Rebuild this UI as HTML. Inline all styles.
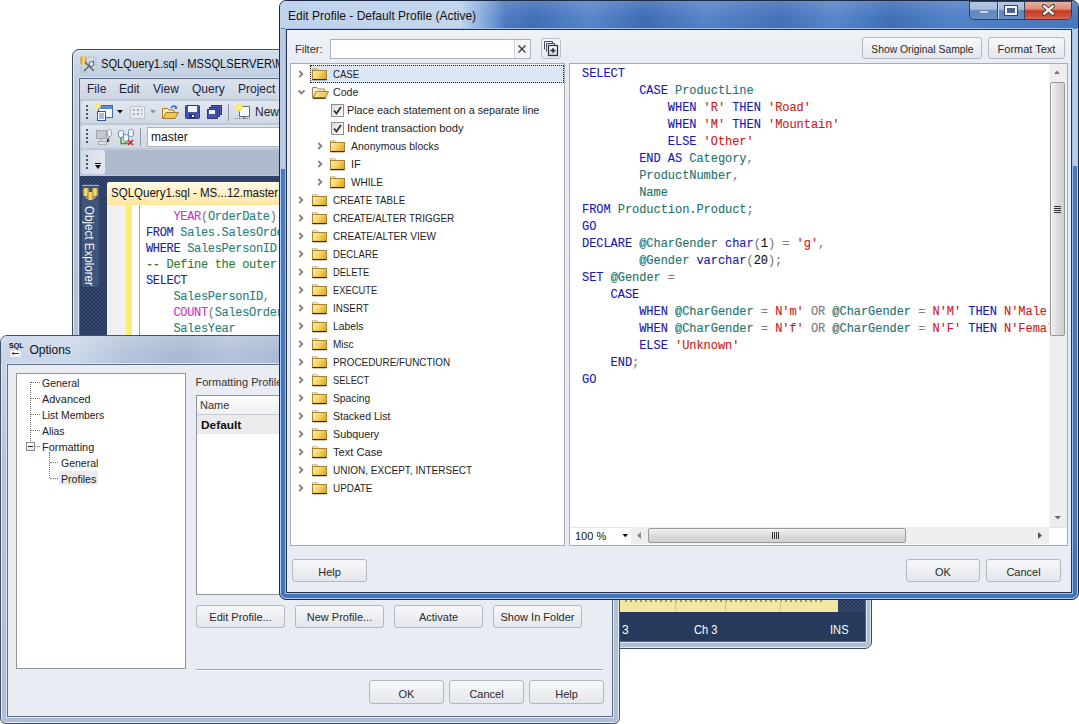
<!DOCTYPE html>
<html><head><meta charset="utf-8">
<style>
*{box-sizing:border-box;margin:0;padding:0}
html,body{width:1079px;height:724px;overflow:hidden;background:#fff;font-family:"Liberation Sans",sans-serif;font-size:11px;color:#1e1e1e}
.a{position:absolute}
.t{position:absolute;white-space:pre;line-height:1}
.mono{font-family:"Liberation Mono",monospace;-webkit-text-stroke:0.12px currentColor}
.btn{position:absolute;border:1px solid #b3b8c0;border-radius:3px;background:linear-gradient(#f7f8fa,#e3e6eb);text-align:center;color:#2a2a2a;font-size:11px;white-space:pre;padding-top:1px}
</style></head><body>
<!-- ============ SSMS WINDOW ============ -->
<div class="a" style="left:72px;top:49px;width:800px;height:600px;border:1px solid #3c485c;border-radius:7px;background:linear-gradient(#d4dfec,#bfcde0 29px,#b4c3d8 120px,#aebed4);box-shadow:inset 0 0 0 1px #e0e8f3"></div>
<!-- title icon -->
<svg class="a" style="left:80px;top:55px" width="17" height="18"><defs><linearGradient id="ti" x1="0" y1="0" x2="1" y2="0"><stop offset="0" stop-color="#c09020"/><stop offset=".5" stop-color="#fbe070"/><stop offset="1" stop-color="#c89a28"/></linearGradient></defs><rect x="0.5" y="1" width="6" height="9" rx="2" fill="url(#ti)"/><path d="M4 16 L14 6 M5 7 L14 16" stroke="#6a6a6a" stroke-width="1.6"/><circle cx="11.5" cy="9" r="2.4" fill="#e8eef8" stroke="#557"/><path d="M8 2 h8 v8" fill="none" stroke="#6cba6c" stroke-dasharray="1 1.5"/><path d="M1 12 v5 h6" fill="none" stroke="#6cba6c" stroke-dasharray="1 1.5"/></svg>
<div class="t" style="left:101px;top:57.8px;font-size:12px;color:#111;transform:scaleX(0.93);transform-origin:0 0">SQLQuery1.sql - MSSQLSERVER\M</div>
<!-- client -->
<div class="a" style="left:79px;top:78px;width:787px;height:564px;border:1px solid #56667e;background:#bdc9da;box-shadow:0 0 0 1px #d9e4f2"></div>
<!-- menu bar -->
<div class="a" style="left:80px;top:79px;width:785px;height:20px;background:linear-gradient(#dce3ed,#ccd5e2)"></div>
<div class="t" style="left:87px;top:82.8px;font-size:12px;color:#1b2440">File</div>
<div class="t" style="left:119px;top:82.8px;font-size:12px;color:#1b2440">Edit</div>
<div class="t" style="left:153px;top:82.8px;font-size:12px;color:#1b2440">View</div>
<div class="t" style="left:192px;top:82.8px;font-size:12px;color:#1b2440">Query</div>
<div class="t" style="left:238px;top:82.8px;font-size:12px;color:#1b2440">Project</div>
<!-- toolbar 1 -->
<div class="a" style="left:81px;top:101px;width:400px;height:22px;border-radius:3px;background:linear-gradient(#e2e7ee,#d0d8e3)"></div>
<svg class="a" style="left:86px;top:104px" width="3" height="16"><rect x="0" y="1" width="2" height="2" fill="#4a566a"/><rect x="0" y="5" width="2" height="2" fill="#4a566a"/><rect x="0" y="9" width="2" height="2" fill="#4a566a"/><rect x="0" y="13" width="2" height="2" fill="#4a566a"/></svg>
<svg class="a" style="left:95px;top:103px" width="19" height="18"><rect x="3.5" y="2.5" width="14" height="12" fill="#f4f8fc" stroke="#3f6aa8"/><rect x="4" y="3" width="13" height="3" fill="#5a8ad0"/><rect x="2.5" y="8.5" width="8" height="9" fill="#fff" stroke="#2f58a0"/><path d="M4 11 h5 M4 13 h5 M4 15 h5" stroke="#4a78c0"/><circle cx="3" cy="3" r="2.6" fill="#ffe040"/><path d="M3 0 V6 M0 3 H6" stroke="#fff6b0" stroke-width=".8"/></svg>
<svg class="a" style="left:117px;top:110px" width="6" height="4"><path d="M0 0 H6 L3 3.5 Z" fill="#111"/></svg>
<svg class="a" style="left:130px;top:106px" width="15" height="13"><rect x="0.5" y="0.5" width="14" height="12" fill="#e6e9ee" stroke="#bfc5cc"/><path d="M3 4 h2 M7 4 h2 M11 4 h1 M3 8 h2 M7 8 h2 M11 8 h1" stroke="#a8aeb6" stroke-width="2"/></svg>
<svg class="a" style="left:150px;top:110px" width="6" height="4"><path d="M0 0 H6 L3 3.5 Z" fill="#8b94a2"/></svg>
<svg class="a" style="left:162px;top:104px" width="17" height="16"><path d="M0.5 14.5 V4.5 h5 l1.5 1.5 h5 v2" fill="#f8e8b0" stroke="#a07e30"/><path d="M1 14.5 L4 8.5 H16.5 L13 14.5 Z" fill="#f0c650" stroke="#a07e30"/><path d="M9 4 q3 -4 6 0" fill="none" stroke="#3a6ab8" stroke-width="1.4"/><path d="M13.5 2 L15.5 4.5 L12.5 5" fill="#3a6ab8"/></svg>
<svg class="a" style="left:185px;top:105px" width="15" height="14"><rect x="0.5" y="0.5" width="14" height="13" rx="1" fill="#4554ac" stroke="#2c3a88"/><rect x="3" y="1" width="9" height="6" fill="#f2f4fc"/><rect x="4" y="9" width="6" height="4" fill="#2a3470"/><rect x="7" y="10" width="2" height="2" fill="#e8ecf8"/></svg>
<svg class="a" style="left:207px;top:105px" width="15" height="14"><rect x="4.5" y="0.5" width="10" height="9" fill="#5060b0" stroke="#2c3a88"/><rect x="2.5" y="2.5" width="10" height="9" fill="#4a5aac" stroke="#2c3a88"/><rect x="0.5" y="4.5" width="10" height="9" fill="#4554ac" stroke="#2c3a88"/><rect x="2" y="5" width="6" height="4" fill="#f2f4fc"/></svg>
<div class="a" style="left:228px;top:104px;width:1px;height:17px;background:#8d99ab"></div>
<svg class="a" style="left:234px;top:103px" width="18" height="17"><rect x="5.5" y="3.5" width="10" height="10" fill="#fafbfd" stroke="#606a78"/><path d="M1 15.5 H17" stroke="#8a6a30" stroke-dasharray="1 1"/><path d="M10 13.5 V16" stroke="#555"/><circle cx="5" cy="4.5" r="3.6" fill="#ffe24a"/><path d="M5 0 V9 M0.5 4.5 H9.5 M2 1.5 L8 7.5 M8 1.5 L2 7.5" stroke="#fff3a0" stroke-width=".7"/></svg>
<div class="t" style="left:255px;top:105.5px;font-size:12px;color:#1b2440">New</div>
<!-- toolbar 2 -->
<div class="a" style="left:81px;top:125px;width:400px;height:23px;border-radius:3px;background:linear-gradient(#e1e6ee,#cfd7e2)"></div>
<svg class="a" style="left:86px;top:128px" width="3" height="16"><rect x="0" y="1" width="2" height="2" fill="#4a566a"/><rect x="0" y="5" width="2" height="2" fill="#4a566a"/><rect x="0" y="9" width="2" height="2" fill="#4a566a"/><rect x="0" y="13" width="2" height="2" fill="#4a566a"/></svg>
<svg class="a" style="left:96px;top:129px" width="16" height="16"><rect x="0.5" y="1.5" width="10" height="8" fill="#c4c8ce" stroke="#a0a6ae"/><rect x="11.5" y="0.5" width="4" height="7" rx="1.5" fill="#eceef0" stroke="#a8aeb4"/><path d="M3 12.5 h8 M5 10 v2 M13 8 v5 h-3" stroke="#a0a6ae"/><rect x="2.5" y="12.5" width="8" height="3" fill="#dde0e4" stroke="#a8aeb4"/></svg>
<svg class="a" style="left:118px;top:129px" width="16" height="17"><path d="M3 6 V14.5 H13" fill="none" stroke="#4a9a30" stroke-width="1.5"/><path d="M8 9 V14" stroke="#4a9a30" stroke-width="1.5"/><rect x="0.5" y="1.5" width="5" height="7" rx="2" fill="#f4f8fc" stroke="#6c8aa8"/><rect x="5.5" y="5.5" width="5" height="7" rx="2" fill="#f4f8fc" stroke="#6c8aa8"/><rect x="10.5" y="0.5" width="5" height="7" rx="2" fill="#f4f8fc" stroke="#6c8aa8"/><path d="M10 11 L15 16 M15 11 L10 16" stroke="#e02020" stroke-width="1.6"/></svg>
<div class="a" style="left:140px;top:128px;width:1px;height:18px;background:#8d99ab"></div>
<div class="a" style="left:147px;top:127px;width:300px;height:20px;background:#fff;border:1px solid #a7b3c4"></div>
<div class="t" style="left:151px;top:130.8px;font-size:12px;color:#111">master</div>
<!-- toolbar 3 grip -->
<div class="a" style="left:81px;top:150px;width:24px;height:24px;border-radius:3px;background:linear-gradient(90deg,#d3dbe6,#e4e9f0)"></div>
<svg class="a" style="left:86px;top:154px" width="3" height="16"><rect x="0" y="1" width="2" height="2" fill="#4a566a"/><rect x="0" y="5" width="2" height="2" fill="#4a566a"/><rect x="0" y="9" width="2" height="2" fill="#4a566a"/><rect x="0" y="13" width="2" height="2" fill="#4a566a"/></svg>
<div class="a" style="left:95px;top:163px;width:6px;height:1px;background:#111"></div>
<div class="a" style="left:95px;top:165px;border:3px solid transparent;border-top:4px solid #111"></div>
<div class="a" style="left:105px;top:150px;width:700px;height:25px;background:#aebbcd"></div>
<!-- navy area -->
<div class="a" style="left:80px;top:176px;width:785px;height:465px;background-color:#2a3b5d;background-image:linear-gradient(45deg,transparent 40%,rgba(70,96,150,.35) 40% 60%,transparent 60%),linear-gradient(-45deg,transparent 40%,rgba(70,96,150,.35) 40% 60%,transparent 60%);background-size:4px 4px"></div>
<div class="a" style="left:107px;top:612px;width:758px;height:29px;background:#283a5b"></div>
<!-- object explorer tab -->
<div class="a" style="left:82px;top:184px;width:17px;height:103px;background:#3f5479;border-radius:2px"></div>
<div class="a" style="left:82px;top:185px;width:17px;height:1px;background:#9aaed0"></div>
<svg class="a" style="left:83px;top:187px" width="16" height="14"><defs><linearGradient id="cy" x1="0" y1="0" x2="1" y2="0"><stop offset="0" stop-color="#b88a18"/><stop offset=".45" stop-color="#fbe880"/><stop offset="1" stop-color="#c09020"/></linearGradient></defs><rect x="0" y="1" width="6" height="8" rx="1.5" fill="url(#cy)"/><rect x="9" y="1" width="6" height="8" rx="1.5" fill="url(#cy)"/><rect x="4.5" y="5" width="6" height="8" rx="1.5" fill="url(#cy)"/><path d="M3 9 V11 H5 M12 9 V11 H10" stroke="#d8d0a0" stroke-width=".8" fill="none"/></svg>
<div class="t" style="left:83px;top:205.5px;font-size:12px;color:#f4f6fa;writing-mode:vertical-rl;transform:scaleY(0.965);transform-origin:0 0">Object Explorer</div>
<!-- document tab -->
<div class="a" style="left:107px;top:182px;width:400px;height:23px;border-radius:2px 2px 0 0;background:linear-gradient(#fffbe8,#ffeec0 60%,#ffe59a)"></div>
<div class="t" style="left:111px;top:187.3px;font-size:12px;color:#111;transform:scaleX(0.96);transform-origin:0 0">SQLQuery1.sql - MS...12.master</div>
<!-- editor -->
<div class="a" style="left:107px;top:205px;width:600px;height:394px;background:#fff"></div>
<div class="a" style="left:107px;top:205px;width:19px;height:394px;background:#eef0f3"></div>
<div class="a" style="left:126px;top:205px;width:6px;height:394px;background:#fcee70"></div>
<div class="a" style="left:139px;top:205px;width:1px;height:394px;background:#a5a5a5"></div>
<div class="a mono" style="left:146px;top:209.3px;font-size:12px;letter-spacing:-0.33px;line-height:16px;white-space:pre;color:#2a7e7e"><span style="color:#111">    </span><span style="color:#d030d0">YEAR</span><span style="color:#808080">(</span>OrderDate<span style="color:#808080">)</span>
<span style="color:#2424a8">FROM</span> Sales.SalesOrderHeader
<span style="color:#2424a8">WHERE</span> SalesPersonID <span style="color:#808080">IS NOT NULL</span>
<span style="color:#2e7d32">-- Define the outer query</span>
<span style="color:#2424a8">SELECT</span>
    SalesPersonID<span style="color:#808080">,</span>
    <span style="color:#d030d0">COUNT</span><span style="color:#808080">(</span>SalesOrderID<span style="color:#808080">)</span>
    SalesYear</div>
<!-- status rows -->
<div class="a" style="left:107px;top:599px;width:731px;height:13px;background:#f2e6a0"></div>
<div class="a" style="left:625px;top:599px;width:200px;height:3px;background:repeating-linear-gradient(90deg,#3a3420 0 2px,transparent 2px 5px);opacity:.45"></div>
<div class="a" style="left:675px;top:599px;width:1px;height:12px;background:#cfc088"></div>
<div class="a" style="left:725px;top:599px;width:1px;height:12px;background:#cfc088"></div>
<div class="a" style="left:780px;top:599px;width:1px;height:12px;background:#cfc088"></div>
<div class="t" style="left:622px;top:624px;font-size:12px;color:#fff">3</div>
<div class="t" style="left:694px;top:624px;font-size:12px;color:#fff;transform:scaleX(0.93);transform-origin:0 0">Ch 3</div>
<div class="t" style="left:829.5px;top:624px;font-size:12px;color:#fff;transform:scaleX(0.93);transform-origin:0 0">INS</div>

<!-- ============ OPTIONS DIALOG ============ -->
<div class="a" style="left:0;top:335px;width:620px;height:389px;border:1px solid #44516a;border-radius:7px 7px 6px 6px;background:linear-gradient(#d8e3f0,#c6d4e6 28px,#b4c4da 120px,#aebed4);box-shadow:inset 0 0 0 1px #e4ecf6"></div>
<div class="a" style="left:1px;top:336px;width:618px;height:28px;border-radius:6px 6px 0 0;background:linear-gradient(90deg,#c8d5e7 0,#ccd9ea 70px,#b6c5db 120px,#a9b9d3 180px,#b3c2d9 230px,#a8b8d2 290px,#b6c4da 380px,#aabad3 470px,#b4c3d9 560px,#aebdd6 618px)"></div>
<div class="a" style="left:1px;top:336px;width:618px;height:28px;border-radius:6px 6px 0 0;background:linear-gradient(rgba(255,255,255,.18),rgba(255,255,255,0) 70%)"></div>
<div class="t" style="left:8.8px;top:342.2px;font-size:7.5px;font-weight:bold;color:#111;transform:scaleX(0.95);transform-origin:0 0">SQL</div>
<svg class="a" style="left:9px;top:349px" width="14" height="9"><rect x="1" y="1" width="11" height="7" fill="#fafbfc" stroke="#d0d4da" stroke-width=".8"/><path d="M3 4.5 H10" stroke="#333" stroke-width="1"/><path d="M2.5 4.5 L5 3 V6 Z" fill="#333"/></svg>
<div class="t" style="left:29.5px;top:344.2px;font-size:12px;color:#111">Options</div>
<div class="a" style="left:7px;top:364px;width:606px;height:353px;border:1px solid #5f6e84;background:#e9ecf2;box-shadow:0 0 0 1px #dce6f3"></div>
<!-- tree -->
<div class="a" style="left:16px;top:373px;width:170px;height:296px;border:1px solid #8e96a0;background:#fff"></div>
<div class="a" style="left:30px;top:382px;width:1px;height:61px;border-left:1px dotted #777"></div>
<div class="a" style="left:31px;top:382px;width:9px;height:1px;border-top:1px dotted #777"></div>
<div class="a" style="left:31px;top:398px;width:9px;height:1px;border-top:1px dotted #777"></div>
<div class="a" style="left:31px;top:414px;width:9px;height:1px;border-top:1px dotted #777"></div>
<div class="a" style="left:31px;top:430px;width:9px;height:1px;border-top:1px dotted #777"></div>
<div class="a" style="left:35px;top:446px;width:5px;height:1px;border-top:1px dotted #777"></div>
<div class="a" style="left:26px;top:442px;width:9px;height:9px;border:1px solid #8a8a8a;background:linear-gradient(#fff,#e4e4e4)"></div>
<div class="a" style="left:28px;top:446px;width:5px;height:1px;background:#222"></div>
<div class="a" style="left:49px;top:452px;width:1px;height:26px;border-left:1px dotted #777"></div>
<div class="a" style="left:50px;top:462px;width:8px;height:1px;border-top:1px dotted #777"></div>
<div class="a" style="left:50px;top:478px;width:8px;height:1px;border-top:1px dotted #777"></div>
<div class="a" style="left:59px;top:471px;width:39px;height:14px;background:#ebebeb"></div>
<div class="t" style="left:41.5px;top:378.1px;font-size:11px;color:#222;transform:scaleX(0.953);transform-origin:0 0">General</div>
<div class="t" style="left:41.5px;top:394.1px;font-size:11px;color:#222;transform:scaleX(0.993);transform-origin:0 0">Advanced</div>
<div class="t" style="left:41.5px;top:410.1px;font-size:11px;color:#222;transform:scaleX(0.942);transform-origin:0 0">List Members</div>
<div class="t" style="left:41.5px;top:426.1px;font-size:11px;color:#222;transform:scaleX(0.940);transform-origin:0 0">Alias</div>
<div class="t" style="left:41.5px;top:442.1px;font-size:11px;color:#222;transform:scaleX(0.993);transform-origin:0 0">Formatting</div>
<div class="t" style="left:60.6px;top:458.1px;font-size:11px;color:#222;transform:scaleX(0.953);transform-origin:0 0">General</div>
<div class="t" style="left:60.6px;top:474.1px;font-size:11px;color:#222;transform:scaleX(0.962);transform-origin:0 0">Profiles</div>
<!-- right pane -->
<div class="t" style="left:195.5px;top:377.3px;font-size:11px;color:#333">Formatting Profiles</div>
<div class="a" style="left:196px;top:395px;width:420px;height:200px;border:1px solid #8e96a0;background:#fff"></div>
<div class="a" style="left:197px;top:396px;width:418px;height:19px;background:linear-gradient(#fdfdfd,#eef0f3);border-bottom:1px solid #c8ccd2"></div>
<div class="t" style="left:200px;top:400.2px;font-size:11px;color:#333">Name</div>
<div class="a" style="left:197px;top:415px;width:418px;height:19px;background:#ebebeb"></div>
<div class="t" style="left:200.5px;top:419.6px;font-size:11px;font-weight:bold;color:#111;transform:scaleX(1.08);transform-origin:0 0">Default</div>
<div class="btn" style="left:196px;top:605px;width:89px;height:23px;line-height:21px">Edit Profile...</div>
<div class="btn" style="left:295px;top:605px;width:89px;height:23px;line-height:21px">New Profile...</div>
<div class="btn" style="left:394px;top:605px;width:89px;height:23px;line-height:21px">Activate</div>
<div class="btn" style="left:493px;top:605px;width:89px;height:23px;line-height:21px">Show In Folder</div>
<div class="a" style="left:196px;top:669px;width:407px;height:2px;background:#9ea4ac;border-bottom:1px solid #fbfcfd"></div>
<div class="btn" style="left:369px;top:680px;width:75px;height:24px;line-height:22px;padding-top:2px">OK</div>
<div class="btn" style="left:449px;top:680px;width:75px;height:24px;line-height:22px;padding-top:2px">Cancel</div>
<div class="btn" style="left:529px;top:680px;width:75px;height:24px;line-height:22px;padding-top:2px">Help</div>

<!-- ============ EDIT PROFILE DIALOG ============ -->
<div class="a" style="left:279px;top:0;width:800px;height:600px;border:1px solid #1c2a42;border-radius:7px;background:linear-gradient(#5a8ad0,#4a7bc0 40px,#4474b8);box-shadow:inset 0 0 0 1px #b0ccf2"></div>
<div class="a" style="left:280px;top:1px;width:798px;height:27px;border-radius:6px 6px 0 0;background:linear-gradient(90deg,#5584c8 0,#5a88cc 200px,#4170b8 255px,#5888cc 310px,#3f6db5 365px,#5686ca 425px,#4472ba 500px,#5888cc 555px,#4170b8 610px,#5383c8 670px,#4a79c0 798px)"></div>
<div class="a" style="left:280px;top:1px;width:798px;height:27px;border-radius:6px 6px 0 0;background:linear-gradient(rgba(255,255,255,.12),rgba(255,255,255,0) 60%,rgba(0,0,0,.03))"></div>
<div class="a" style="left:280px;top:1px;width:225px;height:27px;border-radius:6px 0 0 0;background:linear-gradient(90deg,#c0d3ec,#c4d6ee 80%,rgba(160,190,230,.7) 90%,rgba(90,138,208,0))"></div>
<div class="a" style="left:280px;top:29px;width:5px;height:140px;background:#b9cbe4"></div>
<div class="a" style="left:1073px;top:29px;width:5px;height:137px;background:#b9cbe4"></div>
<div class="t" style="left:288px;top:9.6px;font-size:12px;color:#111">Edit Profile - Default Profile (Active)</div>
<div class="a" style="left:969px;top:1px;width:103px;height:19px;border:1px solid #2e4060;border-radius:0 0 5px 5px;overflow:hidden;background:linear-gradient(#b4c7e2,#a6bcdc 42%,#5f86bf 52%,#6a90c6)"></div>
<div class="a" style="left:997px;top:2px;width:1px;height:17px;background:#34476a;box-shadow:1px 0 0 #c4d4ec"></div>
<div class="a" style="left:1024px;top:2px;width:1px;height:17px;background:#34476a"></div>
<div class="a" style="left:1025px;top:2px;width:46px;height:17px;border-radius:0 0 4px 0;background:linear-gradient(#eab0a2,#dc8a78 42%,#c43a24 52%,#cc4e36 80%,#d86a54)"></div>
<div class="a" style="left:979px;top:10px;width:10px;height:4px;background:#c9d6ea;border:1px solid #6c84a8"></div>
<div class="a" style="left:1005px;top:6px;width:12px;height:9px;border:2px solid #f4f8fc;outline:1px solid #34476a;background:#4a6490"></div>
<svg class="a" style="left:1042px;top:4px" width="13" height="12"><path d="M2 2 L11 10 M11 2 L2 10" stroke="#4a3a3a" stroke-width="4" stroke-linecap="square"/><path d="M2.3 2.3 L10.7 9.7 M10.7 2.3 L2.3 9.7" stroke="#fff" stroke-width="2.3" stroke-linecap="square"/></svg>
<div class="a" style="left:286px;top:29px;width:786px;height:564px;border:1px solid #233250;background:linear-gradient(#eef1f6,#e9ecf2 30px);box-shadow:0 0 0 1px #a0c0ea"></div>
<div class="t" style="left:295px;top:43.6px;font-size:11px;color:#333">Filter:</div>
<div class="a" style="left:330px;top:39px;width:201px;height:20px;border:1px solid #abb3be;background:#fff"></div>
<div class="a" style="left:514px;top:40px;width:16px;height:18px;background:#f4f5f7;border-left:1px solid #d4d8de"></div>
<svg class="a" style="left:517px;top:44px" width="10" height="10"><path d="M1.5 1.5 L8.5 8.5 M8.5 1.5 L1.5 8.5" stroke="#3c3c3c" stroke-width="1.4"/></svg>
<div class="a" style="left:541px;top:38px;width:20px;height:21px;border:1px solid #b8bec8;border-radius:3px;background:linear-gradient(#f7f8fa,#e4e8ee)"></div>
<svg class="a" style="left:543px;top:40px" width="16" height="17"><path d="M1.5 9.5 V1.5 H9.5 V3" fill="none" stroke="#444a58"/><path d="M3.5 11.5 V3.5 H11.5 V5" fill="#eef1f5" stroke="#444a58"/><rect x="5.5" y="5.5" width="9" height="10" fill="url(#pg)" stroke="#2a3040" stroke-width="1.2"/><path d="M7.5 10.5 H12.5 M10 8 V13" stroke="#222" stroke-width="1.3"/><defs><linearGradient id="pg" x1="0" y1="0" x2="0" y2="1"><stop offset="0" stop-color="#ffffff"/><stop offset="1" stop-color="#c6d0de"/></linearGradient></defs></svg>
<div class="btn" style="left:862px;top:37px;width:120px;height:22px;line-height:20px"><span style="display:inline-block;transform:scaleX(0.94)">Show Original Sample</span></div>
<div class="btn" style="left:988px;top:37px;width:77px;height:22px;line-height:20px">Format Text</div>
<div class="a" style="left:290px;top:63px;width:275px;height:483px;border:1px solid #a5acb5;background:#fff"></div>
<div class="a" style="left:310px;top:65px;width:254px;height:18px;border:1px dotted #222;background:#dce7f5"></div>
<svg width="0" height="0" style="position:absolute"><defs><linearGradient id="fg" x1="0" y1="0" x2="1" y2="0.4"><stop offset="0" stop-color="#fcefb4"/><stop offset="0.55" stop-color="#f6d468"/><stop offset="1" stop-color="#e8b028"/></linearGradient><linearGradient id="fo" x1="0" y1="0" x2="1" y2="0.3"><stop offset="0" stop-color="#fbeaa8"/><stop offset="1" stop-color="#f0c448"/></linearGradient></defs></svg>
<svg class="a" style="left:297px;top:69px" width="8" height="10"><path d="M2.3 2 L5.3 5 L2.3 8" stroke="#858585" stroke-width="1.9" fill="none"/></svg>
<svg class="a" style="left:312px;top:68px" width="16" height="13"><path d="M0.5 3 V0.8 h4.5 l1.5 1.5" fill="none" stroke="#b8a478"/><rect x="0.5" y="2.5" width="14" height="9" fill="url(#fg)" stroke="#a88430"/><path d="M0.5 11.6 H14.5" stroke="#3a2a08" stroke-width="1.3"/></svg>
<div class="t" style="left:332.5px;top:68.65px;font-size:11px;color:#1e1e1e;transform:scaleX(0.871);transform-origin:0 0">CASE</div>
<svg class="a" style="left:297px;top:88px" width="9" height="8"><path d="M1.5 2.5 L4.5 5.5 L7.5 2.5" stroke="#808080" stroke-width="1.8" fill="none"/></svg>
<svg class="a" style="left:312px;top:86px" width="17" height="13"><path d="M0.5 12 V1.5 h4.5 l1.5 1.5 h6 v3" fill="#f8ecc0" stroke="#a08a58"/><path d="M1 12 L4 5.5 H16.5 L13.5 12 Z" fill="url(#fo)" stroke="#a88430"/><path d="M1 12.2 H13.5" stroke="#3a2a08" stroke-width="1.2"/></svg>
<div class="t" style="left:332.5px;top:86.65px;font-size:11px;color:#1e1e1e;transform:scaleX(0.962);transform-origin:0 0">Code</div>
<div class="a" style="left:331px;top:104px;width:13px;height:13px;border:1px solid #8f8f8f;background:linear-gradient(135deg,#dcdcdc,#fff)"></div>
<svg class="a" style="left:332px;top:105px" width="11" height="11"><path d="M2 5.5 L4.5 8.5 L9 2" stroke="#333" stroke-width="1.8" fill="none"/></svg>
<div class="t" style="left:347px;top:104.65px;font-size:11px;color:#1e1e1e;transform:scaleX(0.980);transform-origin:0 0">Place each statement on a separate line</div>
<div class="a" style="left:331px;top:122px;width:13px;height:13px;border:1px solid #8f8f8f;background:linear-gradient(135deg,#dcdcdc,#fff)"></div>
<svg class="a" style="left:332px;top:123px" width="11" height="11"><path d="M2 5.5 L4.5 8.5 L9 2" stroke="#333" stroke-width="1.8" fill="none"/></svg>
<div class="t" style="left:347px;top:122.65px;font-size:11px;color:#1e1e1e;transform:scaleX(1.020);transform-origin:0 0">Indent transaction body</div>
<svg class="a" style="left:316px;top:141px" width="8" height="10"><path d="M2.3 2 L5.3 5 L2.3 8" stroke="#858585" stroke-width="1.9" fill="none"/></svg>
<svg class="a" style="left:330px;top:140px" width="16" height="13"><path d="M0.5 3 V0.8 h4.5 l1.5 1.5" fill="none" stroke="#b8a478"/><rect x="0.5" y="2.5" width="14" height="9" fill="url(#fg)" stroke="#a88430"/><path d="M0.5 11.6 H14.5" stroke="#3a2a08" stroke-width="1.3"/></svg>
<div class="t" style="left:350.5px;top:140.65px;font-size:11px;color:#1e1e1e;transform:scaleX(0.953);transform-origin:0 0">Anonymous blocks</div>
<svg class="a" style="left:316px;top:159px" width="8" height="10"><path d="M2.3 2 L5.3 5 L2.3 8" stroke="#858585" stroke-width="1.9" fill="none"/></svg>
<svg class="a" style="left:330px;top:158px" width="16" height="13"><path d="M0.5 3 V0.8 h4.5 l1.5 1.5" fill="none" stroke="#b8a478"/><rect x="0.5" y="2.5" width="14" height="9" fill="url(#fg)" stroke="#a88430"/><path d="M0.5 11.6 H14.5" stroke="#3a2a08" stroke-width="1.3"/></svg>
<div class="t" style="left:350.5px;top:158.65px;font-size:11px;color:#1e1e1e;transform:scaleX(1.002);transform-origin:0 0">IF</div>
<svg class="a" style="left:316px;top:177px" width="8" height="10"><path d="M2.3 2 L5.3 5 L2.3 8" stroke="#858585" stroke-width="1.9" fill="none"/></svg>
<svg class="a" style="left:330px;top:176px" width="16" height="13"><path d="M0.5 3 V0.8 h4.5 l1.5 1.5" fill="none" stroke="#b8a478"/><rect x="0.5" y="2.5" width="14" height="9" fill="url(#fg)" stroke="#a88430"/><path d="M0.5 11.6 H14.5" stroke="#3a2a08" stroke-width="1.3"/></svg>
<div class="t" style="left:350.5px;top:176.65px;font-size:11px;color:#1e1e1e;transform:scaleX(0.916);transform-origin:0 0">WHILE</div>
<svg class="a" style="left:297px;top:195px" width="8" height="10"><path d="M2.3 2 L5.3 5 L2.3 8" stroke="#858585" stroke-width="1.9" fill="none"/></svg>
<svg class="a" style="left:312px;top:194px" width="16" height="13"><path d="M0.5 3 V0.8 h4.5 l1.5 1.5" fill="none" stroke="#b8a478"/><rect x="0.5" y="2.5" width="14" height="9" fill="url(#fg)" stroke="#a88430"/><path d="M0.5 11.6 H14.5" stroke="#3a2a08" stroke-width="1.3"/></svg>
<div class="t" style="left:332.5px;top:194.65px;font-size:11px;color:#1e1e1e;transform:scaleX(0.895);transform-origin:0 0">CREATE TABLE</div>
<svg class="a" style="left:297px;top:213px" width="8" height="10"><path d="M2.3 2 L5.3 5 L2.3 8" stroke="#858585" stroke-width="1.9" fill="none"/></svg>
<svg class="a" style="left:312px;top:212px" width="16" height="13"><path d="M0.5 3 V0.8 h4.5 l1.5 1.5" fill="none" stroke="#b8a478"/><rect x="0.5" y="2.5" width="14" height="9" fill="url(#fg)" stroke="#a88430"/><path d="M0.5 11.6 H14.5" stroke="#3a2a08" stroke-width="1.3"/></svg>
<div class="t" style="left:332.5px;top:212.65px;font-size:11px;color:#1e1e1e;transform:scaleX(0.901);transform-origin:0 0">CREATE/ALTER TRIGGER</div>
<svg class="a" style="left:297px;top:231px" width="8" height="10"><path d="M2.3 2 L5.3 5 L2.3 8" stroke="#858585" stroke-width="1.9" fill="none"/></svg>
<svg class="a" style="left:312px;top:230px" width="16" height="13"><path d="M0.5 3 V0.8 h4.5 l1.5 1.5" fill="none" stroke="#b8a478"/><rect x="0.5" y="2.5" width="14" height="9" fill="url(#fg)" stroke="#a88430"/><path d="M0.5 11.6 H14.5" stroke="#3a2a08" stroke-width="1.3"/></svg>
<div class="t" style="left:332.5px;top:230.65px;font-size:11px;color:#1e1e1e;transform:scaleX(0.915);transform-origin:0 0">CREATE/ALTER VIEW</div>
<svg class="a" style="left:297px;top:249px" width="8" height="10"><path d="M2.3 2 L5.3 5 L2.3 8" stroke="#858585" stroke-width="1.9" fill="none"/></svg>
<svg class="a" style="left:312px;top:248px" width="16" height="13"><path d="M0.5 3 V0.8 h4.5 l1.5 1.5" fill="none" stroke="#b8a478"/><rect x="0.5" y="2.5" width="14" height="9" fill="url(#fg)" stroke="#a88430"/><path d="M0.5 11.6 H14.5" stroke="#3a2a08" stroke-width="1.3"/></svg>
<div class="t" style="left:332.5px;top:248.65px;font-size:11px;color:#1e1e1e;transform:scaleX(0.872);transform-origin:0 0">DECLARE</div>
<svg class="a" style="left:297px;top:267px" width="8" height="10"><path d="M2.3 2 L5.3 5 L2.3 8" stroke="#858585" stroke-width="1.9" fill="none"/></svg>
<svg class="a" style="left:312px;top:266px" width="16" height="13"><path d="M0.5 3 V0.8 h4.5 l1.5 1.5" fill="none" stroke="#b8a478"/><rect x="0.5" y="2.5" width="14" height="9" fill="url(#fg)" stroke="#a88430"/><path d="M0.5 11.6 H14.5" stroke="#3a2a08" stroke-width="1.3"/></svg>
<div class="t" style="left:332.5px;top:266.65px;font-size:11px;color:#1e1e1e;transform:scaleX(0.848);transform-origin:0 0">DELETE</div>
<svg class="a" style="left:297px;top:285px" width="8" height="10"><path d="M2.3 2 L5.3 5 L2.3 8" stroke="#858585" stroke-width="1.9" fill="none"/></svg>
<svg class="a" style="left:312px;top:284px" width="16" height="13"><path d="M0.5 3 V0.8 h4.5 l1.5 1.5" fill="none" stroke="#b8a478"/><rect x="0.5" y="2.5" width="14" height="9" fill="url(#fg)" stroke="#a88430"/><path d="M0.5 11.6 H14.5" stroke="#3a2a08" stroke-width="1.3"/></svg>
<div class="t" style="left:332.5px;top:284.65px;font-size:11px;color:#1e1e1e;transform:scaleX(0.850);transform-origin:0 0">EXECUTE</div>
<svg class="a" style="left:297px;top:303px" width="8" height="10"><path d="M2.3 2 L5.3 5 L2.3 8" stroke="#858585" stroke-width="1.9" fill="none"/></svg>
<svg class="a" style="left:312px;top:302px" width="16" height="13"><path d="M0.5 3 V0.8 h4.5 l1.5 1.5" fill="none" stroke="#b8a478"/><rect x="0.5" y="2.5" width="14" height="9" fill="url(#fg)" stroke="#a88430"/><path d="M0.5 11.6 H14.5" stroke="#3a2a08" stroke-width="1.3"/></svg>
<div class="t" style="left:332.5px;top:302.65px;font-size:11px;color:#1e1e1e;transform:scaleX(0.892);transform-origin:0 0">INSERT</div>
<svg class="a" style="left:297px;top:321px" width="8" height="10"><path d="M2.3 2 L5.3 5 L2.3 8" stroke="#858585" stroke-width="1.9" fill="none"/></svg>
<svg class="a" style="left:312px;top:320px" width="16" height="13"><path d="M0.5 3 V0.8 h4.5 l1.5 1.5" fill="none" stroke="#b8a478"/><rect x="0.5" y="2.5" width="14" height="9" fill="url(#fg)" stroke="#a88430"/><path d="M0.5 11.6 H14.5" stroke="#3a2a08" stroke-width="1.3"/></svg>
<div class="t" style="left:332.5px;top:320.65px;font-size:11px;color:#1e1e1e;transform:scaleX(0.938);transform-origin:0 0">Labels</div>
<svg class="a" style="left:297px;top:339px" width="8" height="10"><path d="M2.3 2 L5.3 5 L2.3 8" stroke="#858585" stroke-width="1.9" fill="none"/></svg>
<svg class="a" style="left:312px;top:338px" width="16" height="13"><path d="M0.5 3 V0.8 h4.5 l1.5 1.5" fill="none" stroke="#b8a478"/><rect x="0.5" y="2.5" width="14" height="9" fill="url(#fg)" stroke="#a88430"/><path d="M0.5 11.6 H14.5" stroke="#3a2a08" stroke-width="1.3"/></svg>
<div class="t" style="left:332.5px;top:338.65px;font-size:11px;color:#1e1e1e;transform:scaleX(0.907);transform-origin:0 0">Misc</div>
<svg class="a" style="left:297px;top:357px" width="8" height="10"><path d="M2.3 2 L5.3 5 L2.3 8" stroke="#858585" stroke-width="1.9" fill="none"/></svg>
<svg class="a" style="left:312px;top:356px" width="16" height="13"><path d="M0.5 3 V0.8 h4.5 l1.5 1.5" fill="none" stroke="#b8a478"/><rect x="0.5" y="2.5" width="14" height="9" fill="url(#fg)" stroke="#a88430"/><path d="M0.5 11.6 H14.5" stroke="#3a2a08" stroke-width="1.3"/></svg>
<div class="t" style="left:332.5px;top:356.65px;font-size:11px;color:#1e1e1e;transform:scaleX(0.900);transform-origin:0 0">PROCEDURE/FUNCTION</div>
<svg class="a" style="left:297px;top:375px" width="8" height="10"><path d="M2.3 2 L5.3 5 L2.3 8" stroke="#858585" stroke-width="1.9" fill="none"/></svg>
<svg class="a" style="left:312px;top:374px" width="16" height="13"><path d="M0.5 3 V0.8 h4.5 l1.5 1.5" fill="none" stroke="#b8a478"/><rect x="0.5" y="2.5" width="14" height="9" fill="url(#fg)" stroke="#a88430"/><path d="M0.5 11.6 H14.5" stroke="#3a2a08" stroke-width="1.3"/></svg>
<div class="t" style="left:332.5px;top:374.65px;font-size:11px;color:#1e1e1e;transform:scaleX(0.848);transform-origin:0 0">SELECT</div>
<svg class="a" style="left:297px;top:393px" width="8" height="10"><path d="M2.3 2 L5.3 5 L2.3 8" stroke="#858585" stroke-width="1.9" fill="none"/></svg>
<svg class="a" style="left:312px;top:392px" width="16" height="13"><path d="M0.5 3 V0.8 h4.5 l1.5 1.5" fill="none" stroke="#b8a478"/><rect x="0.5" y="2.5" width="14" height="9" fill="url(#fg)" stroke="#a88430"/><path d="M0.5 11.6 H14.5" stroke="#3a2a08" stroke-width="1.3"/></svg>
<div class="t" style="left:332.5px;top:392.65px;font-size:11px;color:#1e1e1e;transform:scaleX(0.935);transform-origin:0 0">Spacing</div>
<svg class="a" style="left:297px;top:411px" width="8" height="10"><path d="M2.3 2 L5.3 5 L2.3 8" stroke="#858585" stroke-width="1.9" fill="none"/></svg>
<svg class="a" style="left:312px;top:410px" width="16" height="13"><path d="M0.5 3 V0.8 h4.5 l1.5 1.5" fill="none" stroke="#b8a478"/><rect x="0.5" y="2.5" width="14" height="9" fill="url(#fg)" stroke="#a88430"/><path d="M0.5 11.6 H14.5" stroke="#3a2a08" stroke-width="1.3"/></svg>
<div class="t" style="left:332.5px;top:410.65px;font-size:11px;color:#1e1e1e;transform:scaleX(0.958);transform-origin:0 0">Stacked List</div>
<svg class="a" style="left:297px;top:429px" width="8" height="10"><path d="M2.3 2 L5.3 5 L2.3 8" stroke="#858585" stroke-width="1.9" fill="none"/></svg>
<svg class="a" style="left:312px;top:428px" width="16" height="13"><path d="M0.5 3 V0.8 h4.5 l1.5 1.5" fill="none" stroke="#b8a478"/><rect x="0.5" y="2.5" width="14" height="9" fill="url(#fg)" stroke="#a88430"/><path d="M0.5 11.6 H14.5" stroke="#3a2a08" stroke-width="1.3"/></svg>
<div class="t" style="left:332.5px;top:428.65px;font-size:11px;color:#1e1e1e;transform:scaleX(0.981);transform-origin:0 0">Subquery</div>
<svg class="a" style="left:297px;top:447px" width="8" height="10"><path d="M2.3 2 L5.3 5 L2.3 8" stroke="#858585" stroke-width="1.9" fill="none"/></svg>
<svg class="a" style="left:312px;top:446px" width="16" height="13"><path d="M0.5 3 V0.8 h4.5 l1.5 1.5" fill="none" stroke="#b8a478"/><rect x="0.5" y="2.5" width="14" height="9" fill="url(#fg)" stroke="#a88430"/><path d="M0.5 11.6 H14.5" stroke="#3a2a08" stroke-width="1.3"/></svg>
<div class="t" style="left:332.5px;top:446.65px;font-size:11px;color:#1e1e1e;transform:scaleX(1.010);transform-origin:0 0">Text Case</div>
<svg class="a" style="left:297px;top:465px" width="8" height="10"><path d="M2.3 2 L5.3 5 L2.3 8" stroke="#858585" stroke-width="1.9" fill="none"/></svg>
<svg class="a" style="left:312px;top:464px" width="16" height="13"><path d="M0.5 3 V0.8 h4.5 l1.5 1.5" fill="none" stroke="#b8a478"/><rect x="0.5" y="2.5" width="14" height="9" fill="url(#fg)" stroke="#a88430"/><path d="M0.5 11.6 H14.5" stroke="#3a2a08" stroke-width="1.3"/></svg>
<div class="t" style="left:332.5px;top:464.65px;font-size:11px;color:#1e1e1e;transform:scaleX(0.911);transform-origin:0 0">UNION, EXCEPT, INTERSECT</div>
<svg class="a" style="left:297px;top:483px" width="8" height="10"><path d="M2.3 2 L5.3 5 L2.3 8" stroke="#858585" stroke-width="1.9" fill="none"/></svg>
<svg class="a" style="left:312px;top:482px" width="16" height="13"><path d="M0.5 3 V0.8 h4.5 l1.5 1.5" fill="none" stroke="#b8a478"/><rect x="0.5" y="2.5" width="14" height="9" fill="url(#fg)" stroke="#a88430"/><path d="M0.5 11.6 H14.5" stroke="#3a2a08" stroke-width="1.3"/></svg>
<div class="t" style="left:332.5px;top:482.65px;font-size:11px;color:#1e1e1e;transform:scaleX(0.899);transform-origin:0 0">UPDATE</div>
<div class="a" style="left:569px;top:63px;width:499px;height:483px;border:1px solid #a5acb5;background:#fff"></div>
<div class="a" style="left:570px;top:64px;width:479px;height:463px;overflow:hidden">
<div class="a mono" style="left:12px;top:2.2px;font-size:12px;letter-spacing:-0.05px;line-height:17px;white-space:pre;color:#111"><span style="color:#1818b4">SELECT</span>
        <span style="color:#1818b4">CASE</span> <span style="color:#24736f">ProductLine</span>
            <span style="color:#1818b4">WHEN</span> <span style="color:#d01818">'R'</span> <span style="color:#1818b4">THEN</span> <span style="color:#d01818">'Road'</span>
            <span style="color:#1818b4">WHEN</span> <span style="color:#d01818">'M'</span> <span style="color:#1818b4">THEN</span> <span style="color:#d01818">'Mountain'</span>
            <span style="color:#1818b4">ELSE</span> <span style="color:#d01818">'Other'</span>
        <span style="color:#1818b4">END</span> <span style="color:#1818b4">AS</span> <span style="color:#24736f">Category</span><span style="color:#7a7a7a">,</span>
        <span style="color:#24736f">ProductNumber</span><span style="color:#7a7a7a">,</span>
        <span style="color:#24736f">Name</span>
<span style="color:#1818b4">FROM</span> <span style="color:#24736f">Production.Product</span><span style="color:#7a7a7a">;</span>
<span style="color:#1818b4">GO</span>
<span style="color:#1818b4">DECLARE</span> <span style="color:#24736f">@CharGender</span> <span style="color:#1818b4">char</span><span style="color:#7a7a7a">(</span><span style="color:#111">1</span><span style="color:#7a7a7a">)</span> <span style="color:#7a7a7a">=</span> <span style="color:#d01818">'g'</span><span style="color:#7a7a7a">,</span>
        <span style="color:#24736f">@Gender</span> <span style="color:#1818b4">varchar</span><span style="color:#7a7a7a">(</span><span style="color:#111">20</span><span style="color:#7a7a7a">);</span>
<span style="color:#1818b4">SET</span> <span style="color:#24736f">@Gender</span> <span style="color:#7a7a7a">=</span>
    <span style="color:#1818b4">CASE</span>
        <span style="color:#1818b4">WHEN</span> <span style="color:#24736f">@CharGender</span> <span style="color:#7a7a7a">=</span> <span style="color:#d01818">N'm'</span> <span style="color:#7a7a7a">OR</span> <span style="color:#24736f">@CharGender</span> <span style="color:#7a7a7a">=</span> <span style="color:#d01818">N'M'</span> <span style="color:#1818b4">THEN</span> <span style="color:#d01818">N'Male'</span>
        <span style="color:#1818b4">WHEN</span> <span style="color:#24736f">@CharGender</span> <span style="color:#7a7a7a">=</span> <span style="color:#d01818">N'f'</span> <span style="color:#7a7a7a">OR</span> <span style="color:#24736f">@CharGender</span> <span style="color:#7a7a7a">=</span> <span style="color:#d01818">N'F'</span> <span style="color:#1818b4">THEN</span> <span style="color:#d01818">N'Female'</span>
        <span style="color:#1818b4">ELSE</span> <span style="color:#d01818">'Unknown'</span>
    <span style="color:#1818b4">END</span><span style="color:#7a7a7a">;</span>
<span style="color:#1818b4">GO</span></div>
</div>
<div class="a" style="left:1049px;top:64px;width:18px;height:463px;background:#eeeeee;border-left:1px solid #f4f4f4"></div>
<svg class="a" style="left:1053px;top:69px" width="8" height="6"><path d="M1 5 L4 1.5 L7 5 Z" fill="#777"/></svg>
<svg class="a" style="left:1054px;top:515px" width="8" height="6"><path d="M0.5 1 L7 1 L3.75 4.5 Z" fill="#6a6a6a"/></svg>
<div class="a" style="left:1050px;top:82px;width:15px;height:254px;border:1px solid #9a9a9a;border-radius:2px;background:linear-gradient(90deg,#f2f2f2,#dcdcdc 50%,#cfcfcf)"></div>
<div class="a" style="left:1054px;top:206px;width:7px;height:7px;background:repeating-linear-gradient(#333 0 1px,transparent 1px 2px)"></div>
<div class="a" style="left:570px;top:527px;width:497px;height:17px;background:#fff;border-top:1px solid #e2e4e8"></div>
<div class="t" style="left:575px;top:531px;font-size:11px;color:#111">100 %</div>
<svg class="a" style="left:622px;top:534px" width="7" height="4"><path d="M0.5 0 L6 0 L3.25 3.2 Z" fill="#111"/></svg>
<div class="a" style="left:631px;top:527px;width:418px;height:17px;background:#eeeeee"></div>
<svg class="a" style="left:636px;top:531px" width="6" height="9"><path d="M5 1 L1 4.5 L5 8 Z" fill="#888"/></svg>
<svg class="a" style="left:1037px;top:531px" width="6" height="9"><path d="M1 1 L5 4.5 L1 8 Z" fill="#555"/></svg>
<div class="a" style="left:648px;top:528px;width:258px;height:15px;border:1px solid #9a9a9a;border-radius:2px;background:linear-gradient(#f2f2f2,#dcdcdc 50%,#cfcfcf)"></div>
<div class="a" style="left:772px;top:532px;width:7px;height:7px;background:repeating-linear-gradient(90deg,#333 0 1px,transparent 1px 2px)"></div>
<div class="btn" style="left:292px;top:559px;width:75px;height:23px;line-height:21px;padding-top:2px">Help</div>
<div class="btn" style="left:906px;top:559px;width:74px;height:23px;line-height:21px;padding-top:2px">OK</div>
<div class="btn" style="left:986px;top:559px;width:75px;height:23px;line-height:21px;padding-top:2px">Cancel</div>
</body></html>
